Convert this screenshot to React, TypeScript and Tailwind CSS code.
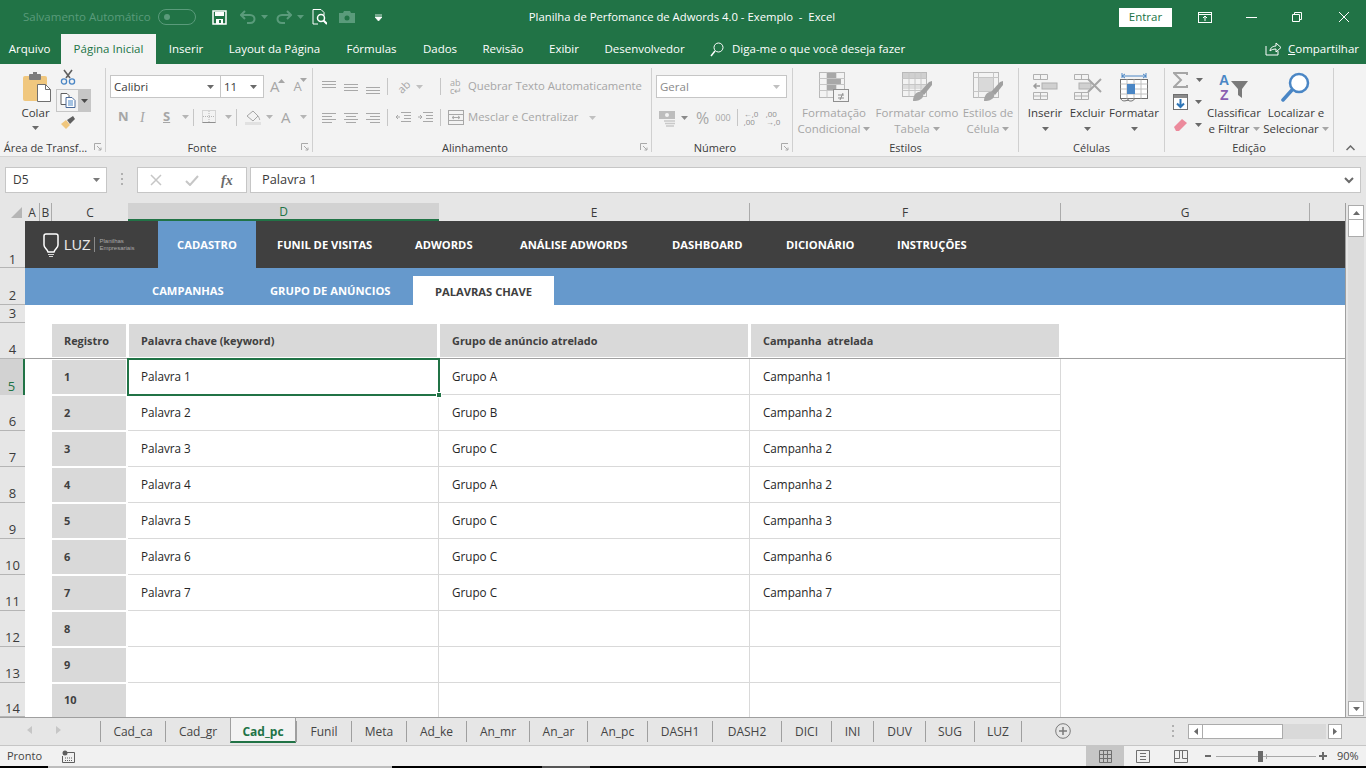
import React from 'react';

const DIS = '#a6a6a6';

function Caret({ color = '#6a6a6a', className = '' }: { color?: string; className?: string }) {
  return (
    <svg width="7" height="4" viewBox="0 0 7 4" className={`shrink-0 ${className}`}>
      <path d="M0 0h7L3.500 4z" fill={color} />
    </svg>
  );
}

function Launcher() {
  return (
    <svg width="8" height="8" viewBox="0 0 8 8" className="absolute right-[3px] top-[3px]">
      <path d="M.5 7V.5H7M3 3l4 4M7 4.500V7H4.500" fill="none" stroke="#a9a9a9" />
    </svg>
  );
}

function Group({ w, label, children }: { w: string; label: string; children: React.ReactNode }) {
  return (
    <div className={`${w} flex shrink-0 flex-col border-r border-[#d0d0d0]`}>
      <div className="h-[72px] overflow-hidden">{children}</div>
      <div className="h-[12px] text-center text-[11px] leading-[15px] text-[#3b3b3b]">{label}</div>
    </div>
  );
}

function GroupLauncher({ w, label, children }: { w: string; label: string; children: React.ReactNode }) {
  return (
    <div className={`${w} flex shrink-0 flex-col border-r border-[#d0d0d0]`}>
      <div className="h-[72px] overflow-hidden">{children}</div>
      <div className="relative h-[12px] whitespace-nowrap pr-[14px] text-center text-[11px] leading-[15px] text-[#3b3b3b]">
        {label}
        <Launcher />
      </div>
    </div>
  );
}

function AlignIcon({ rows, y = 0 }: { rows: number[][]; y?: number }) {
  return (
    <svg width="16" height="16" viewBox="0 0 16 16">
      {rows.map((r, i) => (
        <rect key={i} x={r[0]} y={r[1] + y} width={r[2]} height="1" fill="#a8a8a8" />
      ))}
    </svg>
  );
}

function VSep({ className = '' }: { className?: string }) {
  return <div className={`h-[17px] w-px shrink-0 bg-[#c6c6c6] ${className}`} />;
}

function ClipboardGroup() {
  return (
    <GroupLauncher w="w-[106px]" label="Área de Transf...">
      <div className="flex">
        <div className="ml-[20px] flex w-[31px] flex-col items-center">
          <svg width="30" height="30" viewBox="0 0 30 30" className="mt-[4px] ml-[2px]">
            <rect x="1" y="4" width="24" height="25" rx="2" fill="#f0c77e" />
            <rect x="7" y="2" width="12" height="6" rx="1" fill="#7d7d7d" />
            <rect x="11" y="0" width="4" height="4" fill="#7d7d7d" />
            <path d="M15.500 12.500h8l5 5v12h-13z" fill="#fff" stroke="#6f6f6f" />
            <path d="M23.500 12.500v5h5" fill="none" stroke="#6f6f6f" />
          </svg>
          <span className="mt-[3px] text-[11.500px] leading-[16px] text-[#3b3b3b]">Colar</span>
          <Caret className="mt-[5px]" />
        </div>
        <div className="ml-[5px] flex flex-col">
          <svg width="16" height="16" viewBox="0 0 16 16" className="ml-[4px] mt-[1px]">
            <path d="M4 1l6 8M12 1L6 9" stroke="#5f5f5f" strokeWidth="1.600" />
            <circle cx="4" cy="12.500" r="2.600" fill="none" stroke="#4a86c5" strokeWidth="1.300" />
            <circle cx="12" cy="12.500" r="2.600" fill="none" stroke="#4a86c5" strokeWidth="1.300" />
          </svg>
          <div className="mt-[4px] flex h-[23px] w-[35px] border border-[#c6c6c6]">
            <div className="flex w-[21px] items-center justify-center">
              <svg width="16" height="15" viewBox="0 0 16 15">
                <path d="M1 .5h6l2 2v9H1z" fill="#fff" stroke="#5f5f5f" />
                <path d="M6 4.500h6l3 3v7H6z" fill="#fff" stroke="#4a6a9a" />
                <path d="M8 8h5M8 10h5M8 12h5" stroke="#4a86c5" />
              </svg>
            </div>
            <div className="flex flex-1 items-center justify-center bg-[#c6c6c6]">
              <Caret color="#4a4a4a" />
            </div>
          </div>
          <svg width="16" height="15" viewBox="0 0 16 15" className="ml-[4px] mt-[3px]">
            <path d="M1 9l5-4 4 5-4 4z" fill="#f0c77e" />
            <path d="M7 5l6-4 2 3-5 5z" fill="#5f5f5f" />
          </svg>
        </div>
      </div>
    </GroupLauncher>
  );
}

function FontGroup() {
  return (
    <GroupLauncher w="w-[207px]" label="Fonte">
      <div className="ml-[4px] mt-[7px] flex items-center">
        <div className="flex h-[23px] w-[111px] items-center justify-between border border-[#c6c6c6] bg-white pl-[3px] pr-[6px] text-[11.500px] text-[#3b3b3b]">
          Calibri
          <Caret />
        </div>
        <div className="ml-[-1px] flex h-[23px] w-[44px] items-center justify-between border border-[#c6c6c6] bg-white pl-[3px] pr-[6px] text-[11.500px] text-[#3b3b3b]">
          11
          <Caret />
        </div>
        <span className="relative ml-[6px] text-[15px] leading-none text-[#a6a6a6]">
          A
          <Caret color="#a6a6a6" className="absolute right-[-5px] top-0 rotate-180" />
        </span>
        <span className="relative ml-[14px] text-[13px] leading-none text-[#a6a6a6]">
          A
          <Caret color="#a6a6a6" className="absolute right-[-5px] top-[-2px]" />
        </span>
      </div>
      <div className="ml-[12px] mt-[9px] flex h-[20px] items-center text-[#a6a6a6]">
        <span className="w-[22px] text-[13px] font-bold">N</span>
        <span className="w-[23px] font-['Liberation_Serif'] text-[14px] italic">I</span>
        <span className="w-[19px] text-[13px] font-bold underline">S</span>
        <Caret color="#b5b5b5" />
        <VSep className="ml-[4px]" />
        <svg width="15" height="14" viewBox="0 0 15 14" className="ml-[8px]">
          <rect x=".5" y=".5" width="13" height="12" fill="none" stroke="#b5b5b5" strokeDasharray="1 1" />
          <path d="M7 1v12M1 6.500h12" stroke="#b5b5b5" strokeDasharray="1 1" />
          <path d="M.5 12.500h13" stroke="#8f8f8f" />
        </svg>
        <Caret color="#b5b5b5" className="ml-[8px]" />
        <VSep className="ml-[4px]" />
        <svg width="17" height="16" viewBox="0 0 17 16" className="ml-[8px]">
          <path d="M2 7l6-5 5 5-5 5z" fill="none" stroke="#a6a6a6" />
          <path d="M13 7c1 2 2 3 1.500 4" stroke="#a6a6a6" fill="none" />
          <rect x="0" y="13" width="16" height="3" fill="#e1e1e1" />
        </svg>
        <Caret color="#b5b5b5" className="ml-[4px]" />
        <span className="ml-[8px] text-[15px] leading-none">A</span>
        <Caret color="#b5b5b5" className="ml-[9px]" />
      </div>
    </GroupLauncher>
  );
}

function AlignGroup() {
  const t = [[1, 0, 14], [1, 3, 14], [1, 6, 14]];
  const l = [[1, 3, 14], [1, 6, 10], [1, 9, 14], [1, 12, 10]];
  const c = [[1, 3, 14], [3, 6, 10], [1, 9, 14], [3, 12, 10]];
  const r = [[1, 3, 14], [5, 6, 10], [1, 9, 14], [5, 12, 10]];
  return (
    <GroupLauncher w="w-[339px]" label="Alinhamento">
      <div className="ml-[8px] mt-[7px] flex h-[23px] items-center">
        <div className="w-[22px]"><AlignIcon rows={t} y={2} /></div>
        <div className="w-[22px]"><AlignIcon rows={t} y={5} /></div>
        <div className="w-[22px]"><AlignIcon rows={t} y={8} /></div>
        <VSep />
        <div className="ml-[7px] flex w-[17px] items-center justify-center">
          <span className="-rotate-45 text-[11px] leading-none text-[#a6a6a6]">ab</span>
        </div>
        <Caret color="#c0c0c0" className="ml-[4px]" />
        <VSep className="ml-[17px]" />
        <span className="ml-[9px] w-[18px] shrink-0 text-[9px] leading-[8px] text-[#a6a6a6]">ab<br />c↵</span>
        <span className="whitespace-nowrap text-[11.300px] text-[#a6a6a6]">Quebrar Texto Automaticamente</span>
      </div>
      <div className="ml-[8px] mt-[8px] flex h-[23px] items-center">
        <div className="w-[22px]"><AlignIcon rows={l} /></div>
        <div className="w-[22px]"><AlignIcon rows={c} /></div>
        <div className="w-[22px]"><AlignIcon rows={r} /></div>
        <VSep />
        <svg width="16" height="14" viewBox="0 0 16 14" className="ml-[7px]">
          <path d="M6 1.500h10M9 4.500h7M9 7.500h7M6 10.500h10M5 6H1M3 4L1 6l2 2" stroke="#a8a8a8" fill="none" />
        </svg>
        <svg width="16" height="14" viewBox="0 0 16 14" className="ml-[6px]">
          <path d="M6 1.500h10M9 4.500h7M9 7.500h7M6 10.500h10M1 6h4M3 4l2 2-2 2" stroke="#a8a8a8" fill="none" />
        </svg>
        <VSep className="ml-[7px]" />
        <svg width="16" height="15" viewBox="0 0 16 15" className="ml-[7px]">
          <rect x=".5" y=".5" width="15" height="14" fill="none" stroke="#a8a8a8" />
          <path d="M.5 4.500h15M.5 10.500h15M4 7.500h8M4 7.500l2-1.500M4 7.500L6 9M12 7.500L10 6M12 7.500L10 9" stroke="#a8a8a8" fill="none" />
        </svg>
        <span className="ml-[4px] whitespace-nowrap text-[11.300px] text-[#a6a6a6]">Mesclar e Centralizar</span>
        <Caret color="#c0c0c0" className="ml-[11px]" />
      </div>
    </GroupLauncher>
  );
}

function NumberGroup() {
  return (
    <GroupLauncher w="w-[141px]" label="Número">
      <div className="ml-[4px] mt-[7px] flex h-[23px] w-[131px] items-center justify-between border border-[#c6c6c6] bg-white pl-[3px] pr-[6px] text-[11.500px] text-[#8a8a8a]">
        Geral
        <Caret color="#c0c0c0" />
      </div>
      <div className="ml-[7px] mt-[8px] flex h-[23px] items-center text-[#a6a6a6]">
        <svg width="18" height="18" viewBox="0 0 18 18">
          <rect x="0" y="2" width="16" height="8" fill="#bdbdbd" />
          <circle cx="8" cy="6" r="2" fill="#f3f3f3" />
          <path d="M5 12h11M6 14.500h10M7 17h8" stroke="#c9c9c9" strokeWidth="1.500" />
        </svg>
        <Caret color="#8a8a8a" className="ml-[4px]" />
        <span className="ml-[8px] text-[16px] leading-none">%</span>
        <span className="ml-[6px] text-[9px]">000</span>
        <VSep className="ml-[6px]" />
        <span className="ml-[6px] w-[22px] whitespace-nowrap text-[8px] leading-[8px] text-[#8f8f8f]">←,0<br />,00</span>
        <span className="w-[16px] whitespace-nowrap text-[8px] leading-[8px] text-[#8f8f8f]">,00<br />→,0</span>
      </div>
    </GroupLauncher>
  );
}

function TwoLine({ a, b, w, color = DIS }: { a: string; b: string; w: string; color?: string }) {
  return (
    <div className={`${w} mt-[3px] text-center text-[11.500px] leading-[16px]`} style={{ color }}>
      <div className="whitespace-nowrap">{a}</div>
      <div className="flex items-center justify-center gap-[3px] whitespace-nowrap">
        {b}
        <Caret color="#a6a6a6" />
      </div>
    </div>
  );
}

function StylesGroup() {
  return (
    <Group w="w-[226px]" label="Estilos">
      <div className="flex pt-[4px]">
        <div className="ml-[4px] flex w-[74px] flex-col items-center">
          <svg width="30" height="30" viewBox="0 0 30 30">
            <rect x=".5" y=".5" width="25" height="25" fill="#f3f3f3" stroke="#b9b9b9" />
            <path d="M8 .5v25M17 .5v25M.5 6.500h25M.5 12.500h25M.5 18.500h25" stroke="#c6c6c6" />
            <rect x="8" y="1" width="9" height="5" fill="#a8a8a8" />
            <rect x="8" y="7" width="14" height="5" fill="#a8a8a8" />
            <rect x="8" y="13" width="9" height="5" fill="#a8a8a8" />
            <rect x="14.500" y="17.500" width="15" height="12" fill="#f3f3f3" stroke="#8f8f8f" />
            <path d="M19 23h6M19 26h6M24 21l-3 7" stroke="#8f8f8f" />
          </svg>
          <TwoLine w="w-[74px]" a="Formatação" b="Condicional" />
        </div>
        <div className="ml-[4px] flex w-[84px] flex-col items-center">
          <svg width="30" height="30" viewBox="0 0 30 30">
            <rect x=".5" y=".5" width="24" height="24" fill="#f3f3f3" stroke="#b9b9b9" />
            <rect x="1" y="1" width="23" height="5" fill="#d0d0d0" />
            <rect x="1" y="12" width="23" height="5" fill="#dedede" />
            <path d="M7 .5v24M13 .5v24M19 .5v24M.5 6.500h24M.5 12.500h24M.5 18.500h24" stroke="#c6c6c6" />
            <path d="M18 20L27 10l3-1v4l-8 10z" fill="#a0a0a0" />
            <path d="M11 29c0-6 4-10 8-9 3 1 3 5 0 7-3 2-5 2-8 2z" fill="#a6a6a6" />
          </svg>
          <TwoLine w="w-[84px]" a="Formatar como" b="Tabela" />
        </div>
        <div className="ml-[3px] flex w-[52px] flex-col items-center">
          <svg width="30" height="30" viewBox="0 0 30 30">
            <rect x=".5" y=".5" width="25" height="25" fill="#f3f3f3" stroke="#b9b9b9" />
            <path d="M.5 5.500h25M.5 19.500h25M5.500 .5v25M20.500 .5v25" stroke="#c6c6c6" />
            <rect x="6" y="6" width="14" height="13" fill="#d9d9d9" />
            <path d="M18 20L27 10l3-1v4l-8 10z" fill="#a0a0a0" />
            <path d="M11 29c0-6 4-10 8-9 3 1 3 5 0 7-3 2-5 2-8 2z" fill="#a6a6a6" />
          </svg>
          <TwoLine w="w-[52px]" a="Estilos de" b="Célula" />
        </div>
      </div>
    </Group>
  );
}

function BigCell({ w, label, icon }: { w: string; label: string; icon: React.ReactNode }) {
  return (
    <div className={`${w} flex flex-col items-center`}>
      <div className="h-[30px]">{icon}</div>
      <span className="mt-[3px] whitespace-nowrap text-[11.500px] leading-[16px] text-[#3b3b3b]">{label}</span>
      <Caret className="mt-[6px]" />
    </div>
  );
}

function CellsGroup() {
  return (
    <Group w="w-[146px]" label="Células">
      <div className="ml-[4px] flex pt-[4px]">
        <BigCell
          w="w-[44px]"
          label="Inserir"
          icon={
            <svg width="28" height="30" viewBox="0 0 28 30">
              <path d="M2.500 2.500h14v5h-14zM9.500 2.500v5M2.500 20.500h14v7h-14zM2.500 24h14M9.500 20.500v7" fill="none" stroke="#b0b0b0" />
              <rect x="11" y="11" width="15" height="6" fill="#d0d0d0" stroke="#b0b0b0" />
              <path d="M9 14H3M5.500 11.500L3 14l2.500 2.500" fill="none" stroke="#9a9a9a" strokeWidth="1.500" />
            </svg>
          }
        />
        <BigCell
          w="w-[41px]"
          label="Excluir"
          icon={
            <svg width="32" height="30" viewBox="0 0 32 30">
              <path d="M2.500 2.500h14v5h-14zM9.500 2.500v5M2.500 20.500h14v7h-14zM2.500 24h14M9.500 20.500v7" fill="none" stroke="#b0b0b0" />
              <rect x="7" y="11" width="12" height="6" fill="#d0d0d0" stroke="#b0b0b0" />
              <path d="M16 7l13 13M29 7L16 20" stroke="#a6a6a6" strokeWidth="2" />
            </svg>
          }
        />
        <BigCell
          w="w-[52px]"
          label="Formatar"
          icon={
            <svg width="30" height="30" viewBox="0 0 30 30">
              <path d="M3 4h24M3 1v5M27 1v5M3 4l3-2M3 4l3 2M27 4l-3-2M27 4l-3 2" fill="none" stroke="#4a86c5" />
              <rect x="1.500" y="7.500" width="27" height="19" fill="#fff" stroke="#6f6f6f" />
              <path d="M1.500 12h27M1.500 17h27M1.500 22h27M8 7.500v19M15 7.500v19M22 7.500v19" stroke="#c0c0c0" />
              <rect x="8" y="12" width="8" height="10" fill="#4a86c5" />
              <path d="M2 26c0 4 5 3 7 2 2 2 6 1 7-2M9 27v2" fill="none" stroke="#6f6f6f" />
            </svg>
          }
        />
      </div>
    </Group>
  );
}

function EditGroup() {
  return (
    <Group w="w-[169px]" label="Edição">
      <div className="flex">
        <div className="ml-[8px] flex w-[30px] flex-col">
          <div className="flex h-[22px] items-center justify-between pt-[2px]">
            <svg width="15" height="16" viewBox="0 0 15 16">
              <path d="M14 3V1H1l7 7-7 7h13v-2" fill="none" stroke="#a6a6a6" strokeWidth="2" />
            </svg>
            <Caret color="#6a6a6a" />
          </div>
          <div className="mt-[2px] flex h-[20px] items-center justify-between pr-[1px]">
            <svg width="15" height="16" viewBox="0 0 15 16">
              <rect x=".5" y=".5" width="14" height="15" fill="#fff" stroke="#6f6f6f" />
              <rect x="1" y="1" width="13" height="3" fill="#8a8a8a" />
              <path d="M7.500 5v8M4 9.500l3.500 3.500L11 9.500" fill="none" stroke="#2e75b6" strokeWidth="2" />
            </svg>
            <Caret color="#6a6a6a" />
          </div>
          <div className="mt-[3px] flex h-[20px] items-center justify-between pr-[1px]">
            <svg width="15" height="14" viewBox="0 0 15 14">
              <path d="M1 9l8-8 5 4-8 8H3z" fill="#ec8a9c" />
            </svg>
            <Caret color="#6a6a6a" />
          </div>
        </div>
        <div className="flex w-[62px] flex-col items-center pt-[4px]">
          <svg width="30" height="30" viewBox="0 0 30 30">
            <text x="0" y="13" fontSize="14" fontWeight="700" fill="#4a86c5" fontFamily="Liberation Sans">A</text>
            <text x="1" y="28" fontSize="14" fontWeight="700" fill="#8a5fb0" fontFamily="Liberation Sans">Z</text>
            <path d="M12 9h17l-6 8v9l-4-3v-6z" fill="#7a7a7a" />
          </svg>
          <TwoLine w="w-[62px]" color="#3b3b3b" a="Classificar" b="e Filtrar" />
        </div>
        <div className="flex w-[62px] flex-col items-center pt-[4px]">
          <svg width="30" height="30" viewBox="0 0 30 30">
            <circle cx="18" cy="11" r="9" fill="#fff" stroke="#4a86c5" strokeWidth="2.500" />
            <path d="M11 18L2 28" stroke="#4a86c5" strokeWidth="3.500" strokeLinecap="round" />
          </svg>
          <TwoLine w="w-[62px]" color="#3b3b3b" a="Localizar e" b="Selecionar" />
        </div>
      </div>
    </Group>
  );
}

function TitleBar() {
  return (
    <div className="flex h-[34px] items-center bg-[#217346] text-[11.500px] text-white">
      <span className="ml-[23px] w-[129px] whitespace-nowrap text-[#5a9b7b]">Salvamento Automático</span>
      <div className="ml-[6px] flex h-[16px] w-[38px] items-center rounded-full border border-[#5a9b7b] pl-[5px]">
        <div className="h-[6px] w-[6px] rounded-full bg-[#5a9b7b]" />
      </div>
      <svg width="15" height="15" viewBox="0 0 15 15" className="ml-[16px]">
        <path d="M1 1h13v13H1z" fill="none" stroke="#fff" strokeWidth="1.500" />
        <rect x="3" y="2" width="9" height="4" fill="#fff" />
        <rect x="4" y="9" width="7" height="5" fill="#fff" />
        <rect x="7" y="10" width="2" height="3" fill="#217346" />
      </svg>
      <svg width="16" height="14" viewBox="0 0 16 14" className="ml-[13px]">
        <path d="M5 1L1 5l4 4M1 5h9c6 0 6 8 0 8H7" fill="none" stroke="#5a9b7b" strokeWidth="2" />
      </svg>
      <Caret color="#5a9b7b" className="ml-[5px]" />
      <svg width="16" height="14" viewBox="0 0 16 14" className="ml-[8px]">
        <path d="M11 1l4 4-4 4M15 5H6c-6 0-6 8 0 8h3" fill="none" stroke="#5a9b7b" strokeWidth="2" />
      </svg>
      <Caret color="#5a9b7b" className="ml-[5px]" />
      <svg width="15" height="16" viewBox="0 0 15 16" className="ml-[8px]">
        <path d="M1 .5h8l3 3v3M6 15H1V.5" fill="none" stroke="#fff" />
        <circle cx="9" cy="9" r="3.500" fill="none" stroke="#fff" strokeWidth="1.500" />
        <path d="M11.500 11.500L15 15" stroke="#fff" strokeWidth="2" />
      </svg>
      <svg width="16" height="12" viewBox="0 0 16 12" className="ml-[12px]">
        <path d="M0 2h4l1-2h6l1 2h4v10H0z" fill="#5a9b7b" />
        <circle cx="8" cy="7" r="2.500" fill="#217346" />
      </svg>
      <svg width="7" height="7" viewBox="0 0 7 7" className="ml-[20px]">
        <path d="M0 1h7M0 3h7L3.500 7z" stroke="#fff" strokeWidth=".8" fill="#fff" />
      </svg>
      <span className="ml-[146px] w-[308px] whitespace-nowrap text-center text-[11.300px]">
        Planilha de Perfomance de Adwords 4.0 - Exemplo&nbsp; -&nbsp; Excel
      </span>
      <div className="ml-auto flex h-[19px] w-[53px] items-center justify-center bg-white text-[11.500px] text-[#217346]">
        Entrar
      </div>
      <svg width="14" height="11" viewBox="0 0 14 11" className="ml-[26px]">
        <rect x=".5" y=".5" width="13" height="10" fill="none" stroke="#fff" />
        <path d="M.5 2.500h13M7 9V4M5 6l2-2 2 2" fill="none" stroke="#fff" />
      </svg>
      <div className="ml-[34px] h-px w-[11px] bg-white" />
      <svg width="10" height="10" viewBox="0 0 10 10" className="ml-[35px]">
        <path d="M2.500 2.500V.5h7v7h-2M.5 2.500h7v7h-7z" fill="none" stroke="#fff" />
      </svg>
      <svg width="12" height="12" viewBox="0 0 12 12" className="ml-[36px] mr-[16px]">
        <path d="M1 1l10 10M11 1L1 11" stroke="#fff" />
      </svg>
    </div>
  );
}

const ribbonTabs = [
  { label: 'Arquivo', w: 'w-[59px]' },
  { label: 'Página Inicial', w: 'w-[95px] ml-[2px] bg-[#f3f3f3] text-[#217346]' },
  { label: 'Inserir', w: 'w-[60px]' },
  { label: 'Layout da Página', w: 'w-[117px]' },
  { label: 'Fórmulas', w: 'w-[77px]' },
  { label: 'Dados', w: 'w-[60px]' },
  { label: 'Revisão', w: 'w-[66px]' },
  { label: 'Exibir', w: 'w-[56px]' },
  { label: 'Desenvolvedor', w: 'w-[105px]' },
];

function TabBar() {
  return (
    <div className="flex h-[30px] items-stretch bg-[#217346] text-[11.500px] text-white">
      {ribbonTabs.map((t) => (
        <div key={t.label} className={`flex items-center justify-center whitespace-nowrap pb-[1px] ${t.w}`}>
          {t.label}
        </div>
      ))}
      <div className="ml-[13px] flex items-center">
        <svg width="14" height="15" viewBox="0 0 14 15">
          <circle cx="8.500" cy="5.500" r="4.500" fill="none" stroke="#fff" />
          <path d="M5 9l-4 5" stroke="#fff" strokeWidth="1.500" />
        </svg>
        <span className="ml-[8px] whitespace-nowrap">Diga-me o que você deseja fazer</span>
      </div>
      <div className="ml-auto mr-[7px] flex items-center">
        <svg width="16" height="14" viewBox="0 0 16 14">
          <path d="M1 4v9h12V9M5 9c0-3 3-5 6-5V1l5 4.500L11 10V7c-3 0-5 1-6 2z" fill="none" stroke="#fff" />
        </svg>
        <span className="ml-[7px]"><u>C</u>ompartilhar</span>
      </div>
    </div>
  );
}

function Ribbon() {
  return (
    <div className="flex h-[93px] border-b border-[#d4d4d4] bg-[#f3f3f3] py-[4px]">
      <ClipboardGroup />
      <FontGroup />
      <AlignGroup />
      <NumberGroup />
      <StylesGroup />
      <CellsGroup />
      <EditGroup />
      <div className="flex flex-1 items-end justify-end pb-[1px] pr-[11px]">
        <svg width="9" height="6" viewBox="0 0 9 6">
          <path d="M.5 5l4-4 4 4" fill="none" stroke="#6a6a6a" strokeWidth="1.500" />
        </svg>
      </div>
    </div>
  );
}

function FormulaBar() {
  return (
    <div className="flex h-[46px] items-start bg-[#e6e6e6] pt-[10px] text-[12px] text-[#3b3b3b]">
      <div className="ml-[5px] flex h-[26px] w-[102px] items-center justify-between border border-[#c6c6c6] bg-white pl-[7px] pr-[6px]">
        D5
        <Caret color="#7a7a7a" />
      </div>
      <div className="ml-[14px] mt-[6px] flex w-[3px] flex-col gap-[3px]">
        <div className="h-[2px] w-[2px] bg-[#b0b0b0]" />
        <div className="h-[2px] w-[2px] bg-[#b0b0b0]" />
        <div className="h-[2px] w-[2px] bg-[#b0b0b0]" />
      </div>
      <div className="ml-[13px] flex h-[26px] w-[110px] items-center border border-[#c6c6c6] bg-white">
        <svg width="12" height="12" viewBox="0 0 12 12" className="ml-[12px]">
          <path d="M1 1l10 10M11 1L1 11" stroke="#c6c6c6" strokeWidth="1.500" />
        </svg>
        <svg width="14" height="11" viewBox="0 0 14 11" className="ml-[23px]">
          <path d="M1 6l4 4 8-9" fill="none" stroke="#c6c6c6" strokeWidth="2" />
        </svg>
        <span className="ml-[22px] font-['Liberation_Serif'] text-[14px] font-bold italic text-[#6a6a6a]">fx</span>
      </div>
      <div className="ml-[3px] flex h-[26px] w-[1111px] items-center justify-between border border-[#c6c6c6] bg-white pl-[11px] pr-[6px] text-[12.800px]">
        Palavra 1
        <svg width="10" height="7" viewBox="0 0 10 7">
          <path d="M1 1l4 4 4-4" fill="none" stroke="#6a6a6a" strokeWidth="2" />
        </svg>
      </div>
    </div>
  );
}

const columns = [
  { n: 'A', w: 'w-[15px]', line: true },
  { n: 'B', w: 'w-[12px]', line: true },
  { n: 'C', w: 'w-[76px]', line: false },
  { n: 'D', w: 'w-[311px] border-b-2 border-b-[#217346] bg-[#d2d2d2] text-[#217346]', line: false },
  { n: 'E', w: 'w-[311px]', line: true },
  { n: 'F', w: 'w-[311px]', line: true },
  { n: 'G', w: 'w-[249px]', line: true },
];

function ColumnHeaders() {
  return (
    <div className="flex h-[18px] bg-[#e6e6e6] text-[12px] text-[#3b3b3b]">
      <div className="flex w-[25px] items-end justify-end pb-[3px] pr-[3px]">
        <svg width="11" height="11" viewBox="0 0 11 11"><path d="M11 0v11H0z" fill="#b5b5b5" /></svg>
      </div>
      {columns.map((c) => (
        <div key={c.n} className={`flex items-center justify-center pt-[1px] ${c.w} ${c.line ? 'border-r border-[#ababab]' : ''}`}>
          {c.n}
        </div>
      ))}
    </div>
  );
}

function RowHead({ n, selected = false, h }: { n: number; selected?: boolean; h: string }) {
  return (
    <div
      className={`flex w-[25px] shrink-0 items-end justify-center text-[13px] leading-[16px] ${n === 1 || n === 14 ? 'pb-0' : 'pb-[1px]'} ${h} ${
        selected ? 'border-r-2 border-r-[#217346] bg-[#d2d2d2] text-[#217346]' : 'border-b border-[#b5b5b5] bg-[#e6e6e6] text-[#3b3b3b]'
      }`}
    >
      {n}
    </div>
  );
}

function Logo() {
  return (
    <div className="flex w-[133px] shrink-0 items-center pl-[18px] font-normal text-white">
      <svg width="16" height="26" viewBox="0 0 16 26">
        <path d="M3 2h10a2 2 0 0 1 2 2v9c0 3-3 4-4 7H5c-1-3-4-4-4-7V4a2 2 0 0 1 2-2z" fill="none" stroke="#fff" strokeWidth="1.500" />
        <path d="M5 22.500h6M6 24.500h4" stroke="#d5d5d5" />
      </svg>
      <span className="ml-[5px] font-['Liberation_Sans'] text-[14px] leading-none text-[#e8e8e8]">LUZ</span>
      <div className="ml-[4px] h-[15px] w-px bg-[#8a8a8a]" />
      <span className="ml-[4px] whitespace-nowrap font-['Liberation_Sans'] text-[6px] leading-[7px] text-[#a9a9a9]">
        Planilhas<br />Empresariais
      </span>
    </div>
  );
}

const mainNav = [
  { label: 'FUNIL DE VISITAS', w: 'w-[138px]' },
  { label: 'ADWORDS', w: 'w-[105px]' },
  { label: 'ANÁLISE ADWORDS', w: 'w-[152px]' },
  { label: 'DASHBOARD', w: 'w-[114px]' },
  { label: 'DICIONÁRIO', w: 'w-[111px]' },
  { label: 'INSTRUÇÕES', w: 'w-[80px]' },
];

const rows = [
  ['1', 'Palavra 1', 'Grupo A', 'Campanha 1'],
  ['2', 'Palavra 2', 'Grupo B', 'Campanha 2'],
  ['3', 'Palavra 3', 'Grupo C', 'Campanha 2'],
  ['4', 'Palavra 4', 'Grupo A', 'Campanha 2'],
  ['5', 'Palavra 5', 'Grupo C', 'Campanha 3'],
  ['6', 'Palavra 6', 'Grupo C', 'Campanha 6'],
  ['7', 'Palavra 7', 'Grupo C', 'Campanha 7'],
  ['8', '', '', ''],
  ['9', '', '', ''],
  ['10', '', '', ''],
];

function DataRow({ r, i }: { r: string[]; i: number }) {
  const last = i === rows.length - 1;
  const h = last ? 'h-[34px]' : 'h-[36px]';
  return (
    <div className={`flex ${h}`}>
      <RowHead n={i + 5} h={h} selected={i === 0} />
      <div className="w-[27px] shrink-0 bg-white" />
      <div className={`w-[76px] shrink-0 bg-white pr-[2px] ${last ? 'pt-[1px]' : 'py-[1px]'}`}>
        <div className="flex h-full items-center bg-[#d9d9d9] pl-[12px] text-[11px] font-bold text-[#404040]">{r[0]}</div>
      </div>
      {r.slice(1).map((c, k) => (
        <div
          key={k}
          className={`relative flex w-[311px] shrink-0 items-center border-r border-[#d9d9d9] bg-white pl-[13px] pt-[1px] text-[11.700px] text-[#262626] ${last ? '' : 'border-b'}`}
        >
          {c}
          {i === 0 && k === 0 && (
            <div className="absolute bottom-[-2px] left-[-1px] right-[-2px] top-[-1px] z-10 border-2 border-[#217346]">
              <div className="absolute bottom-[-4px] right-[-4px] h-[6px] w-[6px] border border-white bg-[#217346]" />
            </div>
          )}
        </div>
      ))}
      <div className="flex-1 bg-white" />
    </div>
  );
}

function Sheet() {
  return (
    <div className="flex flex-col">
      <div className="flex h-[47px]">
        <RowHead n={1} h="h-[47px]" />
        <div className="flex flex-1 items-stretch bg-[#404040] text-[11.200px] font-bold text-white">
          <Logo />
          <div className="flex w-[98px] shrink-0 items-center justify-center bg-[#6699cc] pt-[2px]">CADASTRO</div>
          <div className="w-[21px] shrink-0" />
          {mainNav.map((m) => (
            <div key={m.label} className={`flex shrink-0 items-center whitespace-nowrap pt-[2px] ${m.w}`}>
              {m.label}
            </div>
          ))}
        </div>
      </div>
      <div className="flex h-[37px]">
        <RowHead n={2} h="h-[37px]" />
        <div className="flex flex-1 items-end bg-[#6699cc] text-[11.200px] font-bold text-white">
          <div className="h-[29px] w-[127px] shrink-0" />
          <div className="flex h-[29px] w-[118px] shrink-0 items-center pt-[2px]">CAMPANHAS</div>
          <div className="flex h-[29px] w-[143px] shrink-0 items-center whitespace-nowrap pt-[2px]">GRUPO DE ANÚNCIOS</div>
          <div className="flex h-[29px] w-[141px] shrink-0 items-center justify-center bg-white pt-[3px] text-[#404040]">PALAVRAS CHAVE</div>
        </div>
      </div>
      <div className="flex h-[18px]">
        <RowHead n={3} h="h-[18px]" />
        <div className="flex-1 bg-white" />
      </div>
      <div className="flex h-[36px]">
        <RowHead n={4} h="h-[36px]" />
        <div className="flex flex-1 border-b border-[#9f9f9f] bg-white py-[1px] text-[10.900px] font-bold text-[#404040]">
          <div className="w-[27px] shrink-0" />
          <div className="flex w-[74px] shrink-0 items-center bg-[#d9d9d9] pl-[12px] pt-[2px]">Registro</div>
          <div className="ml-[3px] flex w-[308px] shrink-0 items-center bg-[#d9d9d9] pl-[12px] pt-[2px]">Palavra chave (keyword)</div>
          <div className="ml-[3px] flex w-[308px] shrink-0 items-center bg-[#d9d9d9] pl-[12px] pt-[2px]">Grupo de anúncio atrelado</div>
          <div className="ml-[3px] flex w-[308px] shrink-0 items-center bg-[#d9d9d9] pl-[12px] pt-[2px]">Campanha&nbsp; atrelada</div>
        </div>
      </div>
      {rows.map((r, i) => (
        <DataRow key={i} r={r} i={i} />
      ))}
    </div>
  );
}

function ScrollButton({ dir }: { dir: 'up' | 'down' }) {
  return (
    <div className="flex h-[15px] items-center justify-center border border-[#ababab] bg-white">
      <Caret color="#6a6a6a" className={dir === 'up' ? 'rotate-180' : ''} />
    </div>
  );
}

function VScroll() {
  return (
    <div className="flex w-[21px] flex-col border-l border-[#9f9f9f] bg-[#e6e6e6] px-[2px] pb-[1px] pt-[2px]">
      <ScrollButton dir="up" />
      <div className="flex flex-1 flex-col bg-[#dcdcdc]">
        <div className="h-[17px] border border-t-0 border-[#ababab] bg-white" />
      </div>
      <ScrollButton dir="down" />
    </div>
  );
}

const sheets = [
  { n: 'Cad_ca', w: 'w-[65px]' },
  { n: 'Cad_gr', w: 'w-[65px]' },
  { n: 'Cad_pc', w: 'w-[66px]' },
  { n: 'Funil', w: 'w-[55px]' },
  { n: 'Meta', w: 'w-[55px]' },
  { n: 'Ad_ke', w: 'w-[60px]' },
  { n: 'An_mr', w: 'w-[63px]' },
  { n: 'An_ar', w: 'w-[58px]' },
  { n: 'An_pc', w: 'w-[60px]' },
  { n: 'DASH1', w: 'w-[65px]' },
  { n: 'DASH2', w: 'w-[69px]' },
  { n: 'DICI', w: 'w-[50px]' },
  { n: 'INI', w: 'w-[42px]' },
  { n: 'DUV', w: 'w-[52px]' },
  { n: 'SUG', w: 'w-[49px]' },
  { n: 'LUZ', w: 'w-[47px]' },
];

function SheetTabs() {
  return (
    <div className="flex h-[28px] border-t border-[#9f9f9f] bg-[#e6e6e6] text-[12px] text-[#444]">
      <div className="flex w-[100px] items-center pb-[3px]">
        <svg width="5" height="8" viewBox="0 0 5 8" className="ml-[27px]"><path d="M5 0v8L0 4z" fill="#c6c6c6" /></svg>
        <svg width="5" height="8" viewBox="0 0 5 8" className="ml-[24px]"><path d="M0 0v8l5-4z" fill="#c6c6c6" /></svg>
      </div>
      {sheets.map((s) => {
        const active = s.n === 'Cad_pc';
        return (
          <div
            key={s.n}
            className={`${s.w} flex shrink-0 items-center justify-center ${
              active
                ? 'h-[25px] border-x border-b-2 border-x-[#9f9f9f] border-b-[#217346] bg-[#f3f3f3] pt-[5px] font-bold text-[#217346]'
                : 'mt-[3px] h-[21px] border-l border-[#9f9f9f]'
            }`}
          >
            {s.n}
          </div>
        );
      })}
      <div className="mt-[3px] h-[21px] border-l border-[#9f9f9f]" />
      <svg width="16" height="16" viewBox="0 0 16 16" className="ml-[33px] mt-[5px]">
        <circle cx="8" cy="8" r="7.300" fill="none" stroke="#7a7a7a" />
        <path d="M8 4v8M4 8h8" stroke="#7a7a7a" strokeWidth="1.500" />
      </svg>
      <div className="ml-[101px] mt-[7px] flex h-[13px] w-[3px] flex-col gap-[3px]">
        <div className="h-[2px] w-[2px] bg-[#b0b0b0]" />
        <div className="h-[2px] w-[2px] bg-[#b0b0b0]" />
        <div className="h-[2px] w-[2px] bg-[#b0b0b0]" />
      </div>
      <div className="ml-[13px] mt-[6px] flex h-[15px] w-[155px]">
        <div className="flex w-[15px] items-center justify-center border border-[#ababab] bg-white">
          <svg width="4" height="7" viewBox="0 0 4 7"><path d="M4 0v7L0 3.500z" fill="#6a6a6a" /></svg>
        </div>
        <div className="h-full w-[80px] border border-l-0 border-[#ababab] bg-white" />
        <div className="w-[43px] bg-[#d9d9d9]" />
        <div className="ml-[2px] flex w-[14px] items-center justify-center border border-[#ababab] bg-white">
          <svg width="4" height="7" viewBox="0 0 4 7"><path d="M0 0v7l4-3.500z" fill="#6a6a6a" /></svg>
        </div>
      </div>
    </div>
  );
}

function StatusBar() {
  return (
    <div className="flex h-[21px] items-center border-t border-[#c6c6c6] bg-[#f1f1f1] text-[11px] text-[#444]">
      <span className="ml-[7px] w-[55px]">Pronto</span>
      <svg width="13" height="13" viewBox="0 0 13 13">
        <circle cx="3" cy="3" r="2.500" fill="#5f5f5f" />
        <path d="M5 2.500h7.500v10H.5V6" fill="none" stroke="#5f5f5f" />
        <path d="M3 8h8M3 10.500h8" stroke="#5f5f5f" strokeDasharray="1 1" />
      </svg>
      <div className="ml-[1011px] flex h-full w-[38px] items-center justify-center bg-[#c6c6c6]">
        <svg width="13" height="13" viewBox="0 0 13 13">
          <path d="M.5.5h12v12H.5zM4.500.5v12M8.500.5v12M.5 4.500h12M.5 8.500h12" fill="none" stroke="#6f6f6f" />
        </svg>
      </div>
      <svg width="14" height="13" viewBox="0 0 14 13" className="ml-[12px]">
        <path d="M.5.5h13v12H.5zM4 3.500h6M4 6.500h6M4 9.500h6" fill="none" stroke="#6f6f6f" />
      </svg>
      <svg width="14" height="13" viewBox="0 0 14 13" className="ml-[24px]">
        <path d="M.5.500h13v12H.5zM.5 8.500h5V.5M8.500.5v8h5" fill="none" stroke="#6f6f6f" />
      </svg>
      <div className="ml-[17px] h-[2px] w-[6px] bg-[#6a6a6a]" />
      <div className="relative ml-[5px] h-px w-[100px] bg-[#a8a8a8]">
        <div className="absolute left-[42px] top-[-5px] h-[11px] w-[5px] bg-[#6a6a6a]" />
        <div className="absolute left-[50px] top-[-2px] h-[5px] w-px bg-[#a8a8a8]" />
      </div>
      <svg width="8" height="8" viewBox="0 0 8 8" className="ml-[3px]">
        <path d="M4 0v8M0 4h8" stroke="#6a6a6a" strokeWidth="2" />
      </svg>
      <span className="ml-[10px]">90%</span>
    </div>
  );
}

export default function App() {
  return (
    <div className="h-[768px] w-[1366px] overflow-hidden bg-[#e6e6e6] font-['Open_Sans',sans-serif]">
      <TitleBar />
      <TabBar />
      <Ribbon />
      <FormulaBar />
      <div className="flex h-[514px]">
        <div className="w-[1345px] shrink-0">
          <ColumnHeaders />
          <Sheet />
        </div>
        <VScroll />
      </div>
      <SheetTabs />
      <StatusBar />
      <div className="flex h-[2px] bg-black">
        <div className="ml-[48px] w-[344px] bg-[#bdbdbd]" />
        <div className="ml-[150px] w-[48px] bg-[#555]" />
      </div>
    </div>
  );
}
